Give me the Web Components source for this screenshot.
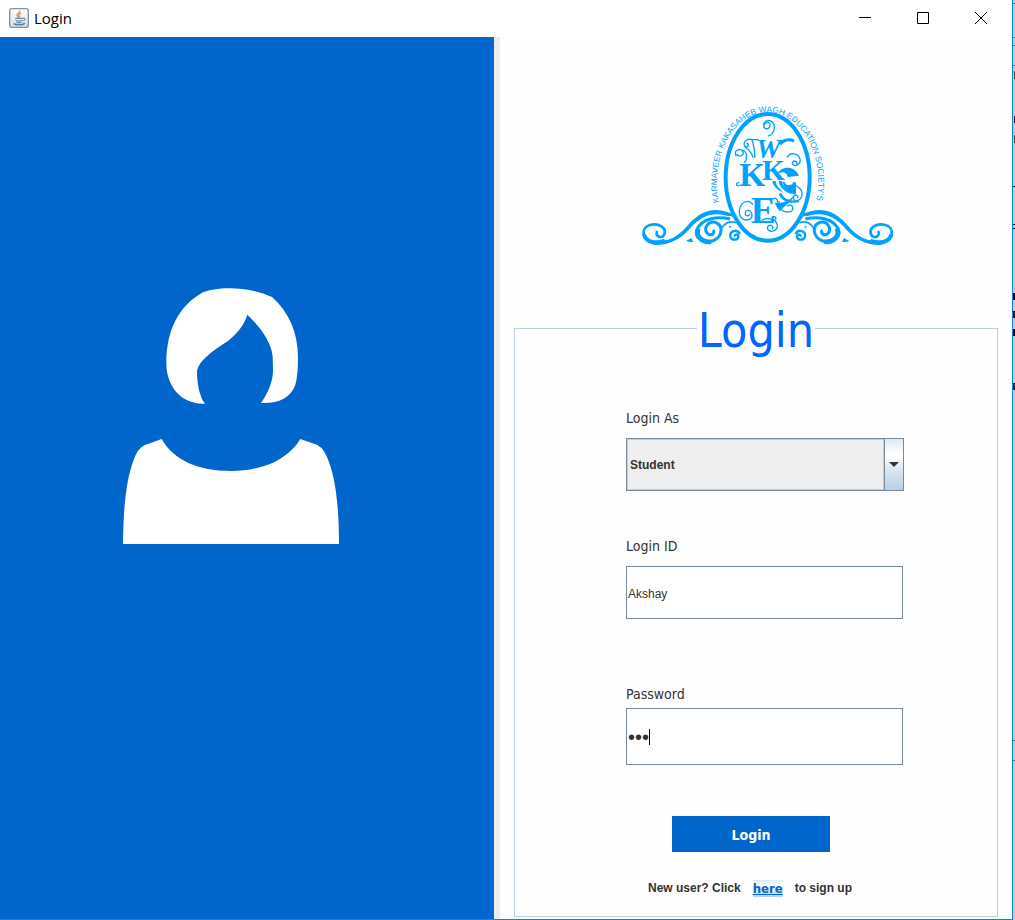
<!DOCTYPE html>
<html lang="en">
<head>
<meta charset="utf-8">
<meta name="viewport" content="width=device-width, initial-scale=1">
<title>Login</title>
<style>
  body { margin: 0; font: 12px/18px "Liberation Sans", Arial, sans-serif; color: #333; background: #fff; }
</style>
</head>
<body>
<app-window caption="Login">
  <split-pane>
    <user-portrait slot="left"></user-portrait>
    <login-panel slot="right"></login-panel>
  </split-pane>
</app-window>

<script>
const define = (name, html, init) => customElements.define(name, class extends HTMLElement {
  constructor() {
    super();
    this.attachShadow({ mode: 'open' }).innerHTML = html;
  }
  connectedCallback() { if (init) init(this, this.shadowRoot); }
});

define('java-icon', `
<style>:host { display: block; width: 20px; height: 20px; } svg { display: block; }</style>
<svg width="20" height="20" viewBox="0 0 60 60" aria-hidden="true">
  <defs><linearGradient id="g" x2="0" y2="1"><stop offset="0" stop-color="#fff"/><stop offset="1" stop-color="#d3dde6"/></linearGradient></defs>
  <rect x="2" y="2" width="56" height="56" rx="6" fill="url(#g)" stroke="#7e92a6" stroke-width="4"/>
  <path d="M31 8c5 6-9 9-7 14 1 3 4 4 4 7M37 15c-6 3-10 6-6 10 2 2 0 4-1 5" fill="none" stroke="#f0883a" stroke-width="4"/>
  <path d="M18 31h24M20 37c5 3 15 3 20 0M22 43c5 2 11 2 16 0M42 31c9-2 8 6 0 8" fill="none" stroke="#54799c" stroke-width="3"/>
  <path d="M14 47c8 5 24 5 34-1" fill="none" stroke="#54799c" stroke-width="4"/>
</svg>`);

define('title-bar', `
<style>
  :host { display: flex; align-items: stretch; height: 37px; background: #fff; color: #000; }
  .name { display: flex; align-items: center; gap: 5px; flex: 1; padding: 0 0 2px 9px; font: 15px/20px "Open Sans", "Noto Sans", sans-serif; }
  button { width: 58px; padding: 0 0 2px; border: 0; background: none; display: grid; place-items: center; }
  .controls { display: flex; padding-right: 2px; }
  svg { display: block; }
</style>
<div class="name"><java-icon></java-icon><slot></slot></div>
<div class="controls">
  <button aria-label="Minimize"><svg width="14" height="14"><path d="M1 6.5h12" stroke="#000"/></svg></button>
  <button aria-label="Maximize"><svg width="14" height="14"><path d="M1.5 1.5h11v11h-11z" fill="none" stroke="#000"/></svg></button>
  <button aria-label="Close"><svg width="14" height="14"><path d="M1 1l12 12M13 1L1 13" stroke="#000"/></svg></button>
</div>`);

define('app-window', `
<style>
  :host { display: flex; min-height: 100vh; }
  .frame { flex: 1; display: flex; flex-direction: column; border: solid #1b7fd4; border-width: 0 1px 1px 0; }
  ::slotted(split-pane) { flex: 1; }
  .behind { width: 2px; background:
    linear-gradient(#555, #555) 0 3px / 2px 1px no-repeat,
    linear-gradient(#778, #778) 0 37px / 2px 1px no-repeat,
    linear-gradient(#667, #667) 0 45px / 2px 1px no-repeat,
    linear-gradient(#667, #667) 0 65px / 2px 1px no-repeat,
    linear-gradient(#642, #642) 1px 71px / 1px 8px no-repeat,
    linear-gradient(#503, #503) 1px 116px / 1px 7px no-repeat,
    linear-gradient(#642, #642) 1px 135px / 1px 8px no-repeat,
    linear-gradient(#222, #222) 0 186px / 2px 1px no-repeat,
    linear-gradient(#111, #111) 0 224px / 2px 1px no-repeat,
    linear-gradient(#111, #111) 0 228px / 2px 1px no-repeat,
    linear-gradient(#000, #000) 0 293px / 2px 7px no-repeat,
    linear-gradient(#210, #210) 0 311px / 2px 7px no-repeat,
    linear-gradient(#000, #000) 0 329px / 2px 7px no-repeat,
    linear-gradient(#222, #222) 0 383px / 2px 7px no-repeat,
    linear-gradient(#567, #567) 0 740px / 2px 1px no-repeat,
    linear-gradient(#667, #667) 0 760px / 2px 1px no-repeat,
    #c8c8c8; }
</style>
<div class="frame"><title-bar></title-bar><slot></slot></div>
<div class="behind"></div>`, (host, root) => {
  root.querySelector('title-bar').textContent = host.getAttribute('caption');
});

define('split-pane', `
<style>
  :host { display: grid; grid-template-columns: 494fr 6px 512fr; }
  .left { background: #0066cc; }
  .bar { background: #ededed; }
  .right { background: #fefefe; display: flex; flex-direction: column; }
  ::slotted([slot=right]) { flex: 1; }
</style>
<div class="left"><slot name="left"></slot></div>
<div class="bar"></div>
<div class="right"><slot name="right"></slot></div>`);

define('user-portrait', `
<style>
  :host { display: grid; grid-template-columns: 110fr 240fr 144fr; padding-top: 238px; }
  svg { grid-column: 2; display: block; width: 100%; }
</style>
<svg viewBox="0 0 720 840" fill="#fff" role="img" aria-label="User">
  <path d="M285 386C215 390 168 335 169 262C170 165 205 95 276 53C325 33 415 34 486 66C538 113 564 172 564 250Q564 300 556 330C540 370 505 386 453 384C477 350 489 316 489 285L488 245C485 203 452 157 412 119C403 150 376 185 340 207C305 230 264 260 261 290C261 325 268 363 285 386Z"/>
  <path d="M155 492C190 555 265 588 363 588C460 588 535 552 571 492L607 505Q636 511 650 544C676 602 687 690 687 807H39C40 690 50 602 76 542Q90 510 120 505Z"/>
</svg>`);

define('society-logo', `
<style>:host { display: block; } svg { display: block; width: 100%; }</style>
<svg viewBox="-12 0 834 510" fill="none" stroke="#00a2ff" role="img" aria-label="Karmaveer Kakasaheb Wagh Education Society's">
  <defs>
    <path id="arc" d="M267 352A152 212 0 1 1 559 352"/>
    <g id="wing">
      <path d="M318 396C255 365 215 378 178 422C146 460 110 480 72 475C35 468 30 428 60 420C88 413 112 430 102 450C94 464 72 452 82 438" stroke-width="8"/>
      <path d="M300 390C245 370 205 390 172 432C145 462 110 476 72 472" stroke-width="10"/>
      <path d="M42 448C47 470 75 478 105 467" stroke-width="12"/>
      <path d="M300 402C258 392 216 402 201 433C191 461 225 479 252 466C278 453 281 421 256 412C235 407 220 428 231 444C242 456 258 444 249 435" stroke-width="9"/>
      <path d="M205 430C195 455 218 473 243 470" stroke-width="14"/>
      <path d="M318 413C298 405 282 417 274 430" stroke-width="5"/>
      <path d="M330 447C320 429 298 440 301 454C305 469 326 466 325 453C322 446 312 448 315 455" stroke-width="7"/>
      <path d="M184 459L190 471Q178 472 168 468Z" fill="#00a2ff" stroke="none"/>
      <circle cx="300" cy="425" r="3" fill="#00a2ff" stroke="none"/>
    </g>
  </defs>
  <ellipse cx="413" cy="277" rx="126" ry="190" stroke-width="12"/>
  <use href="#wing"/>
  <use href="#wing" transform="matrix(-1 0 0 1 826 0)"/>
  <g fill="#00a2ff" stroke="none" font-family="'Liberation Sans', sans-serif" font-size="25">
    <text><textPath href="#arc">KARMAVEER KAKASAHEB WAGH EDUCATION SOCIETY'S</textPath></text>
  </g>
  <g fill="#00a2ff" stroke="none" font-family="'Liberation Serif', serif" font-weight="bold">
    <text x="378" y="218" font-size="84" font-style="italic">W</text>
    <text x="328" y="304" font-size="100">K</text>
    <text x="396" y="284" font-size="88">K</text>
    <text x="362" y="414" font-size="112">E</text>
  </g>
  <g stroke-width="4">
    <path d="M402 130C396 113 423 103 420 123C416 137 396 132 402 115C411 96 439 110 432 134Q428 150 414 153"/>
    <path d="M386 164H369C356 160 339 167 343 181C350 192 362 178 350 174M343 183C355 193 365 200 369 218M366 165Q375 190 374 218"/>
    <path d="M319 214C309 197 328 188 338 198C346 212 325 219 321 207M338 195C354 203 352 224 342 233"/>
    <path d="M330 300C316 308 317 290 328 293"/>
    <path d="M450 178C462 164 478 162 492 168" stroke-width="9"/>
    <path d="M472 218C478 200 504 204 510 221C514 238 493 249 487 236C488 222 507 229 499 238"/>
    <path d="M369 359C355 339 331 352 328 376C326 401 346 411 362 401C371 390 362 370 348 378C340 391 354 397 360 387"/>
    <path d="M394 407C411 394 437 402 442 419C444 438 418 446 412 430C414 413 435 423 426 432M425 397C445 389 439 410 424 408"/>
    <path d="M468 306C485 294 510 302 516 323C518 347 494 354 490 340C491 325 509 331 502 340M474 309C473 322 488 329 492 315"/>
    <path d="M447 348C445 377 463 385 484 379C496 366 480 352 471 364"/>
    <path d="M422 350C424 335 449 338 441 353"/>
  </g>
  <g fill="#00a2ff" stroke="none">
    <path d="M441 268C452 244 491 239 507 272L473 276C469 259 454 259 441 268Z"/>
    <path d="M427 288C429 302 440 315 462 324C442 306 438 298 437 288ZM446 288C448 304 460 319 487 329C466 311 458 300 456 288Z"/>
    <path d="M463 290C473 310 490 302 488 292H498V329C477 325 462 308 458 290ZM434 354C459 353 479 350 492 329C491 346 465 361 449 379L442 369Z"/>
    <path d="M454 324C461 344 487 350 506 345L508 351C480 358 453 348 446 326Z"/>
  </g>
</svg>`);

define('form-field', `
<style>
  :host { display: flex; flex-direction: column; gap: var(--label-gap, 11px); }
  label { font: 14px/18px "DejaVu Sans Condensed", Tahoma, sans-serif; }
  .box { position: relative; height: var(--box-height, 53px); }
  input, select { box-sizing: border-box; width: 100%; height: 100%; display: block; margin: 0; border: 1px solid #7a8a99; border-radius: 0; color: #333; outline: 0; }
  .box.text { margin-right: 1px; }
  input { background: #fff; padding: 2px 1px 0; font: 12px/16px "Liberation Sans", Arial, sans-serif; }
  input[type=password] { font-size: 20px; line-height: 24px; }
  select { appearance: none; padding: 0 22px 0 3px; font: bold 12px/16px "Liberation Sans", Arial, sans-serif; background:
    linear-gradient(#dde8f3, #fff 30%, #fff 34%, #dbe6f2 60%, #b8cfe5) right / 18px 100% no-repeat,
    linear-gradient(#7a8a99, #7a8a99) right 18px top / 1px 100% no-repeat,
    linear-gradient(#eee, #eee) 1px 1px / calc(100% - 21px) calc(100% - 2px) no-repeat,
    #b8cfe5; }
  svg { position: absolute; right: 5px; top: 24px; pointer-events: none; }
  .caret { position: absolute; left: 23px; top: 21px; width: 1px; height: 16px; background: #000; }
</style>
<label for="f"></label><div class="box"></div>`, (host, root) => {
  const kind = host.getAttribute('kind');
  const value = host.getAttribute('value');
  const box = root.querySelector('.box');
  root.querySelector('label').textContent = host.getAttribute('label');
  if (kind === 'select') {
    box.innerHTML = `<select id="f"><option>${value}</option></select>
      <svg width="10" height="5"><path d="M0 0h10L5 5z" fill="#333"/></svg>`;
  } else {
    box.classList.add('text');
    box.innerHTML = `<input id="f" type="${kind}" value="${value}">` +
      (kind === 'password' ? '<span class="caret"></span>' : '');
  }
});

define('login-panel', `
<style>
  :host { display: flex; flex-direction: column; padding: 48px 14px 2px; }
  .brand { display: grid; grid-template-columns: 112fr 278fr 94fr; }
  society-logo { grid-column: 2; }
  fieldset { flex: 1; min-width: 0; margin: 43px 0 0; padding: 0; border: 1px solid #b8cfe5; }
  legend { margin: 0 auto; padding: 4px 1px 0; color: #0066ff; font: 48px/56px "DejaVu Sans Condensed", Tahoma, sans-serif; }
  form { display: grid; grid-template-columns: 111fr 278fr 93fr; padding-top: 51px; }
  form > * { grid-column: 2; }
  .id { margin-top: 46px; }
  .pass { margin-top: 66px; --label-gap: 5px; --box-height: 57px; }
  button { margin: 51px 74px 0 46px; height: 36px; padding: 2px 0 0; border: 0; background: #0066cc; color: #fff; font: bold 14px/18px "DejaVu Sans Condensed", Tahoma, sans-serif; }
  p { display: flex; gap: 12px; margin: 28px 0 0 22px; font-weight: bold; line-height: 17px; white-space: nowrap; }
  a { color: #0066cc; font: bold 13px/17px "DejaVu Sans Condensed", Tahoma, sans-serif; background: linear-gradient(#dde8f3, #fff 34%, #b8cfe5); }
</style>
<div class="brand"><society-logo></society-logo></div>
<fieldset>
  <legend>Login</legend>
  <form>
    <form-field kind="select" label="Login As" value="Student"></form-field>
    <form-field class="id" kind="text" label="Login ID" value="Akshay"></form-field>
    <form-field class="pass" kind="password" label="Password" value="abc"></form-field>
    <button type="button">Login</button>
    <p><span>New user? Click</span><a href="#signup">here</a><span>to sign up</span></p>
  </form>
</fieldset>`);
</script>
</body>
</html>
